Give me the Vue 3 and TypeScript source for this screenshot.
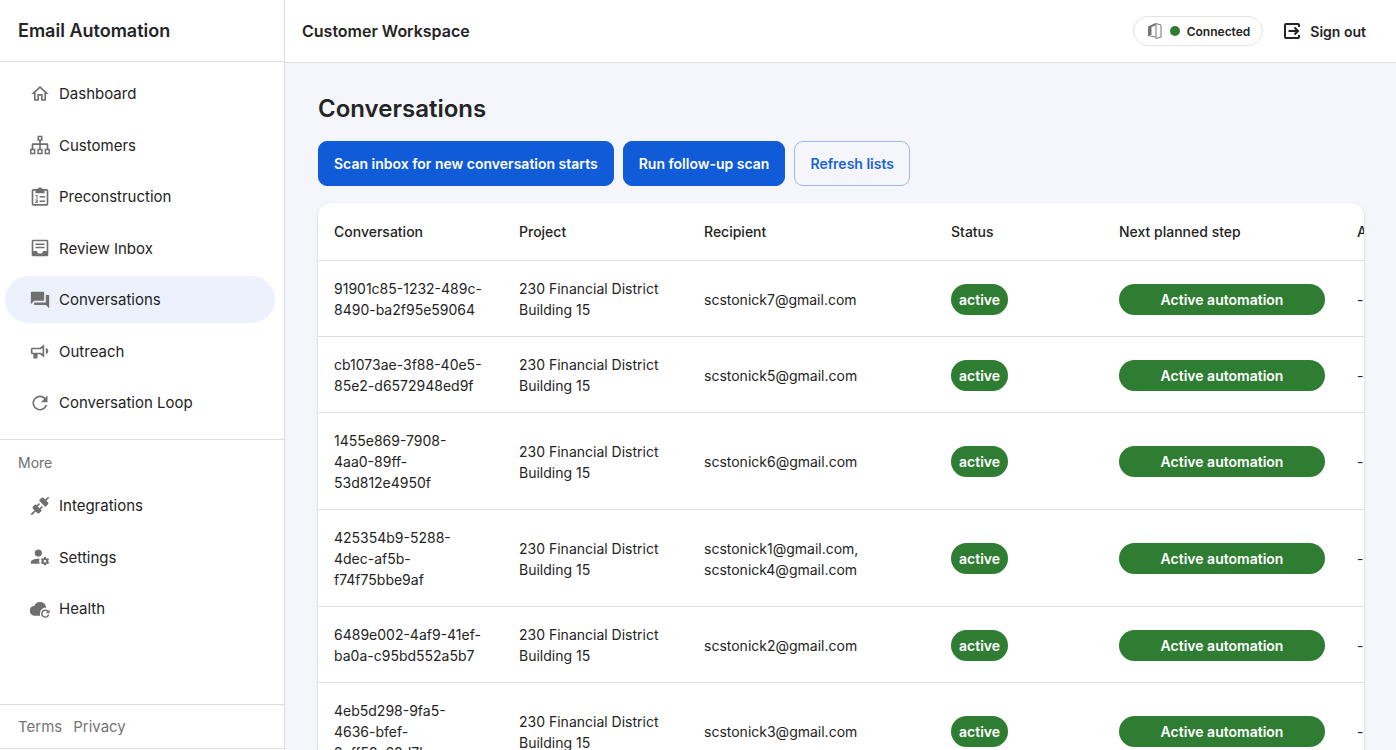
<script setup lang="ts">
interface NavItem {
  label: string
  icon: string
  active?: boolean
}

interface Conversation {
  id: string
  project: string
  recipient: string
}

const primaryNav: NavItem[] = [
  { label: 'Dashboard', icon: 'M12 5.2L17.2 9.9V18.2H15.2V12H8.800V18.2H6.800V9.9L12 5.2M12 2.500L1.500 12H4.800V20.200H10.800V14H13.200V20.200H19.200V12H22.500' },
  { label: 'Customers', icon: 'M9 1H15V7H13V10H20.5A1.5 1.5 0 0 1 22 11.5V16.5H24V23H17.5V16.5H20V12H13V16.5H15.2V23H8.8V16.5H11V12H4V16.5H6.5V23H0V16.5H2V11.5A1.5 1.5 0 0 1 3.5 10H11V7H9ZM10.8 2.8V5.2H13.2V2.8ZM1.8 18.3V21.2H4.7V18.3ZM10.6 18.3V21.2H13.4V18.3ZM19.3 18.3V21.2H22.2V18.3Z' },
  { label: 'Preconstruction', icon: 'M20 2.500H15C14.500 1.200 13.400 .5 12 .5S9.500 1.200 9 2.500H4A2 2 0 0 0 2 4.500V20.500A2 2 0 0 0 4 22.500H20A2 2 0 0 0 22 20.500V4.500A2 2 0 0 0 20 2.500M20 20.500H4V4.500H6.500V7.500H17.500V4.500H20ZM6.500 9.500H9V14H7.800V10.700H6.500ZM11.500 10.800H18V12.600H11.500ZM6.300 15H9.500V17.200L8 18.200H9.500V19.300H6.300V18L8.300 16.500V16.100H6.300ZM11.500 16.200H18V18H11.500Z' },
  { label: 'Review Inbox', icon: 'M20 2H4A2 2 0 0 0 2 4V20A2 2 0 0 0 4 22H20A2 2 0 0 0 22 20V4A2 2 0 0 0 20 2M20 15.500H15.8C15.5 17.4 14 18.6 12 18.6S8.500 17.4 8.200 15.500H4V4H20ZM6.500 6.500H17.500V8.400H6.500ZM6.500 10.500H17.500V12.400H6.500Z' },
  { label: 'Conversations', active: true, icon: 'M17 12V3A1 1 0 0 0 16 2H2A1 1 0 0 0 1 3V17L5 13H16A1 1 0 0 0 17 12M22 6H19V15H5V17A1 1 0 0 0 6 18H19L23 22V7A1 1 0 0 0 22 6Z' },
  { label: 'Outreach', icon: 'M12 8H3A2 2 0 0 0 1 10V14A2 2 0 0 0 3 16H4V20A1 1 0 0 0 5 21H8A1 1 0 0 0 9 20V16H12L17 20V4L12 8M15 15.6L13 14H3V10H13L15 8.4V15.6M22 12C22 13.71 20.54 15.26 19 16V8C20.53 8.75 22 10.3 22 12Z' },
  { label: 'Conversation Loop', icon: 'M18.36 5.64A9 9 0 1 0 20.7 14.3H18.6A7 7 0 1 1 16.9 7.1L13 11H21V3Z' },
]

const moreNav: NavItem[] = [
  { label: 'Integrations', icon: 'M21.4 7.5C22.2 8.3 22.2 9.6 21.4 10.3L18.6 13.1L10.8 5.3L13.6 2.5C14.4 1.7 15.7 1.7 16.4 2.5L18.2 4.3L21.7 .8L23.1 2.2L19.6 5.7L21.4 7.5M15.6 13.3L14.2 11.9L11.4 14.7L9.3 12.6L12.1 9.8L10.7 8.4L7.9 11.2L6.4 9.8L3.6 12.6C2.8 13.4 2.8 14.7 3.6 15.4L5.4 17.2L.9 21.7L2.3 23.1L6.8 18.6L8.6 20.4C9.4 21.2 10.7 21.2 11.4 20.4L14.2 17.6L12.8 16.2L15.6 13.3Z' },
  { label: 'Settings', icon: 'M10 3A4.3 4.3 0 0 0 10 11.6A4.3 4.3 0 0 0 10 3M17 12C16.87 12 16.76 12.09 16.74 12.21L16.55 13.53C16.25 13.66 15.96 13.82 15.7 14L14.46 13.5C14.35 13.5 14.22 13.5 14.15 13.63L13.15 15.36C13.09 15.47 13.11 15.6 13.21 15.68L14.27 16.5C14.25 16.67 14.24 16.83 14.24 17C14.24 17.17 14.25 17.33 14.27 17.5L13.21 18.32C13.12 18.4 13.09 18.53 13.15 18.64L14.15 20.37C14.21 20.5 14.34 20.5 14.46 20.5L15.7 20C15.96 20.18 16.24 20.35 16.55 20.47L16.74 21.79C16.76 21.91 16.86 22 17 22H19C19.11 22 19.22 21.91 19.24 21.79L19.43 20.47C19.73 20.34 20 20.18 20.27 20L21.5 20.5C21.63 20.5 21.76 20.5 21.83 20.37L22.83 18.64C22.89 18.53 22.86 18.4 22.77 18.32L21.7 17.5C21.72 17.33 21.74 17.17 21.74 17C21.74 16.83 21.73 16.67 21.7 16.5L22.76 15.68C22.85 15.6 22.88 15.47 22.82 15.36L21.82 13.63C21.76 13.5 21.63 13.5 21.5 13.5L20.27 14C20 13.82 19.73 13.65 19.42 13.53L19.23 12.21C19.22 12.09 19.11 12 19 12H17M10 14C5 14 1 15.79 1 18V20H11.68A7 7 0 0 1 11 17A7 7 0 0 1 11.64 14.09C11.11 14.03 10.56 14 10 14M18 15.5C18.83 15.5 19.5 16.17 19.5 17C19.5 17.83 18.83 18.5 18 18.5C17.16 18.5 16.5 17.83 16.5 17C16.5 16.17 17.17 15.5 18 15.5Z' },
  { label: 'Health', icon: 'M12.2 20H6A6 6 0 0 1 5.3 8A7.3 7.3 0 0 1 19.3 10.4C15 10 12 13.5 12 17C12 18 12 19 12.2 20M18.5 12.5A5 5 0 1 0 23.2 18.7H21.5A3.3 3.3 0 1 1 20.8 15.3L18.8 17.2H23.5V12.5L22 14A5 5 0 0 0 18.5 12.5' },
]

const project = '230 Financial District Building 15'

const conversations: Conversation[] = [
  { id: '91901c85-1232-489c-8490-ba2f95e59064', project, recipient: 'scstonick7@gmail.com' },
  { id: 'cb1073ae-3f88-40e5-85e2-d6572948ed9f', project, recipient: 'scstonick5@gmail.com' },
  { id: '1455e869-7908-4aa0-89ff-53d812e4950f', project, recipient: 'scstonick6@gmail.com' },
  { id: '425354b9-5288-4dec-af5b-f74f75bbe9af', project, recipient: 'scstonick1@gmail.com, scstonick4@gmail.com' },
  { id: '6489e002-4af9-41ef-ba0a-c95bd552a5b7', project, recipient: 'scstonick2@gmail.com' },
  { id: '4eb5d298-9fa5-4636-bfef-2eff52a68d7b', project, recipient: 'scstonick3@gmail.com' },
]
</script>

<template>
  <div class="shell">
    <aside class="sidebar">
      <div class="brand">Email Automation</div>
      <nav class="nav" aria-label="Main">
        <a v-for="item in primaryNav" :key="item.label" href="#" class="nav-item" :class="{ active: item.active }">
          <svg class="nav-icon" viewBox="0 0 24 24" aria-hidden="true"><path fill-rule="evenodd" :d="item.icon" /></svg>
          <span>{{ item.label }}</span>
        </a>
      </nav>
      <div class="more">
        <div class="more-label">More</div>
        <nav class="nav nav-more" aria-label="More">
          <a v-for="item in moreNav" :key="item.label" href="#" class="nav-item">
            <svg class="nav-icon" viewBox="0 0 24 24" aria-hidden="true"><path fill-rule="evenodd" :d="item.icon" /></svg>
            <span>{{ item.label }}</span>
          </a>
        </nav>
      </div>
      <footer class="legal">
        <a href="#">Terms</a>
        <a href="#">Privacy</a>
      </footer>
    </aside>

    <div class="workspace">
      <header class="topbar">
        <div class="workspace-name">Customer Workspace</div>
        <div class="session">
          <div class="connection">
            <svg class="office" viewBox="0 0 16 18" aria-hidden="true">
              <path class="office-side" d="M1 4.500L8.500 1V3.500L4.500 5V13L1 14.500Z" />
              <path class="office-frame" d="M9 1.500L14 3V15L9 16.500ZM3.500 14.300L9 15" />
            </svg>
            <span class="dot"></span>
            <span>Connected</span>
          </div>
          <button type="button" class="sign-out">
            <svg viewBox="0 0 18 18" aria-hidden="true">
              <path d="M16 5V3A1 1 0 0 0 15 2H3A1 1 0 0 0 2 3V15A1 1 0 0 0 3 16H15A1 1 0 0 0 16 15V13M5.500 9H15M11.500 5.500L15 9L11.500 12.500" />
            </svg>
            <span>Sign out</span>
          </button>
        </div>
      </header>

      <main class="content">
        <h1>Conversations</h1>
        <div class="actions">
          <button type="button" class="btn primary">Scan inbox for new conversation starts</button>
          <button type="button" class="btn primary">Run follow-up scan</button>
          <button type="button" class="btn outline">Refresh lists</button>
        </div>
        <div class="card">
          <table>
            <colgroup>
              <col class="col-id" />
              <col class="col-project" />
              <col class="col-recipient" />
              <col class="col-status" />
              <col class="col-step" />
              <col class="col-actions" />
            </colgroup>
            <thead>
              <tr>
                <th scope="col">Conversation</th>
                <th scope="col">Project</th>
                <th scope="col">Recipient</th>
                <th scope="col">Status</th>
                <th scope="col">Next planned step</th>
                <th scope="col">Actions</th>
              </tr>
            </thead>
            <tbody>
              <tr v-for="row in conversations" :key="row.id">
                <td class="id">{{ row.id }}</td>
                <td>{{ row.project }}</td>
                <td>{{ row.recipient }}</td>
                <td><span class="pill">active</span></td>
                <td><span class="pill wide">Active automation</span></td>
                <td>-</td>
              </tr>
            </tbody>
          </table>
        </div>
      </main>
    </div>
  </div>
</template>

<style>
body {
  margin: 0;
  overflow: hidden;
}
</style>

<style scoped>
.shell {
  display: flex;
  height: 100vh;
  overflow: hidden;
  background: #f4f6fb;
  color: #242424;
  font-family: Inter, "Liberation Sans", sans-serif;
  font-size: 14px;
}

a {
  color: inherit;
  text-decoration: none;
}

button {
  font: inherit;
  cursor: pointer;
}

.sidebar {
  box-sizing: border-box;
  display: flex;
  flex: 0 0 285px;
  flex-direction: column;
  padding-bottom: 1px;
  border-right: 1px solid #dcdcdc;
  background: #fff;
}

.brand {
  padding: 19px 18px 18px;
  border-bottom: 1px solid #e0e0e0;
  font-size: 18px;
  font-weight: 600;
  line-height: 24px;
}

.nav {
  display: flex;
  flex-direction: column;
  justify-content: space-between;
  height: 356px;
  padding: 8px 9px 13px 5px;
}

.nav-more {
  height: 150px;
  padding: 0 9px 0 5px;
}

.nav-item {
  display: flex;
  align-items: center;
  gap: 9px;
  height: 47px;
  padding: 0 25px;
  border-radius: 24px;
  font-size: 15px;
}

.nav-item.active {
  background: #edf1fc;
}

.nav-icon {
  width: 20px;
  height: 20px;
  fill: #707070;
}

.more {
  border-top: 1px solid #e0e0e0;
}

.more-label {
  padding: 13px 18px 9px;
  color: #6f6f6f;
  line-height: 20px;
}

.legal {
  display: flex;
  gap: 11px;
  margin-top: auto;
  padding: 12px 18px 11px;
  border-top: 1px solid #dcdcdc;
  border-bottom: 1px solid #dcdcdc;
  color: #757575;
  font-size: 15px;
  line-height: 20px;
}

.workspace {
  display: flex;
  flex: 1;
  flex-direction: column;
  min-width: 0;
}

.topbar {
  display: flex;
  flex: none;
  align-items: center;
  justify-content: space-between;
  height: 62px;
  padding: 0 30px 0 17px;
  border-bottom: 1px solid #e0e0e0;
  background: #fff;
}

.workspace-name {
  font-size: 16px;
  font-weight: 600;
}

.session {
  display: flex;
  align-items: center;
  gap: 20px;
}

.connection {
  display: flex;
  align-items: center;
  gap: 7px;
  height: 28px;
  padding: 0 12px 0 13px;
  border: 1px solid #e3e3e3;
  border-radius: 15px;
  font-size: 12px;
  font-weight: 600;
}

.office {
  width: 16px;
  height: 18px;
}

.office-side {
  fill: #757575;
}

.office-frame {
  fill: none;
  stroke: #757575;
}

.dot {
  width: 10px;
  height: 10px;
  border-radius: 50%;
  background: #2e7d32;
}

.sign-out {
  display: flex;
  align-items: center;
  gap: 9px;
  padding: 0;
  border: 0;
  background: none;
  color: #242424;
  font-weight: 600;
}

.sign-out svg {
  width: 18px;
  height: 18px;
  fill: none;
  stroke: currentColor;
  stroke-width: 2;
}

.content {
  flex: 1;
  min-height: 0;
  padding: 29px 32px 0 33px;
}

h1 {
  margin: 0 0 16px;
  font-size: 24px;
  font-weight: 600;
  line-height: 33px;
}

.actions {
  display: flex;
  gap: 9px;
  margin-bottom: 17px;
}

.btn {
  height: 45px;
  padding: 0 15px;
  border: 1px solid #0f5bd8;
  border-radius: 9px;
  font-weight: 600;
}

.primary {
  background: #0f5bd8;
  color: #fff;
}

.outline {
  border-color: #9db9ef;
  background: transparent;
  color: #1b62d4;
}

.card {
  overflow: hidden;
  border-radius: 12px;
  background: #fff;
  box-shadow: 0 1px 3px rgba(30, 40, 70, 0.2);
}

table {
  width: 1180px;
  border-collapse: separate;
  border-spacing: 0;
  table-layout: fixed;
  line-height: 21px;
}

.col-id,
.col-project {
  width: 185px;
}

.col-recipient {
  width: 247px;
}

.col-status {
  width: 168px;
}

.col-step {
  width: 238px;
}

th,
td {
  padding: 17px 16px 16px;
  border-bottom: 1px solid #dedede;
  text-align: left;
  vertical-align: middle;
}

th {
  padding: 18px 16px;
  font-weight: 500;
}

.id {
  padding-right: 19px;
}

.pill {
  display: inline-block;
  padding: 5px 8px;
  border-radius: 16px;
  background: #2e7d32;
  color: #fff;
  font-weight: 600;
  text-align: center;
  vertical-align: middle;
}

.wide {
  display: block;
}
</style>
